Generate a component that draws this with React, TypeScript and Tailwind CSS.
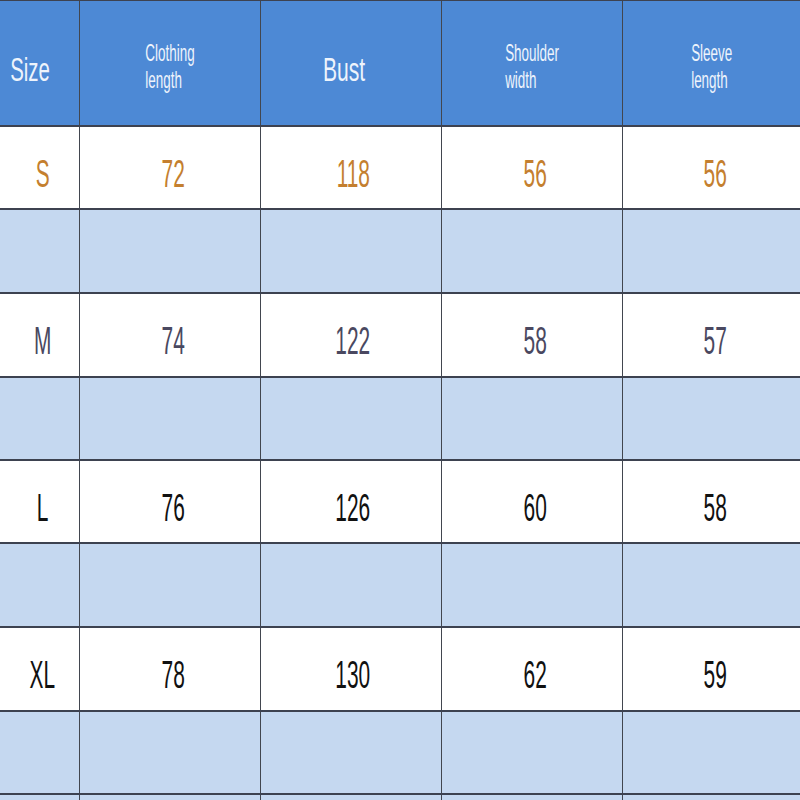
const rows = [
  { size: "S", values: ["72", "118", "56", "56"], color: "text-[#c47f2f]" },
  { size: "M", values: ["74", "122", "58", "57"], color: "text-[#4a4860]" },
  { size: "L", values: ["76", "126", "60", "58"], color: "text-[#111111]" },
  { size: "XL", values: ["78", "130", "62", "59"], color: "text-[#111111]" },
];

const heights = ["h-[83px]", "h-[84px]"];
// the numbers sit a little right of each column's centre
const shifts = ["translate-x-[3px]", "translate-x-[2px]", "translate-x-[3px]", "translate-x-[4px]"];

const Cell = ({ children, last }: { children?: React.ReactNode; last?: boolean }) => (
  <div
    className={
      "flex items-center justify-center " +
      (last ? "" : "border-r-[1.5px] border-[#42464f]")
    }
  >
    {children}
  </div>
);

const Num = ({ text, color, shift }: { text: string; color: string; shift: string }) => (
  <span
    className={
      "inline-block scale-x-[0.55] text-[38px] leading-none translate-y-[6px] " + shift + " " + color
    }
  >
    {text}
  </span>
);

const Head2 = ({ a, b }: { a: string; b: string }) => (
  <div className="flex flex-col items-start text-[24px] leading-[27px] text-[#eef4fc] scale-x-[0.56] translate-y-[3px]">
    <span>{a}</span>
    <span>{b}</span>
  </div>
);

const cols = "grid grid-cols-[80px_181px_181px_181px_177px]";

export default function App() {
  return (
    <div className="w-[800px] h-[800px] overflow-hidden bg-[#c5d8f0] font-['Liberation_Sans',Arial,sans-serif]">
      <div className={cols + " h-[127px] bg-[#4d89d5] border-t border-b-2 border-[#3d4250]"}>
        <Cell>
          <span className="inline-block scale-x-[0.6] text-[34px] text-[#eef4fc] -translate-x-[9px] translate-y-[6px]">
            Size
          </span>
        </Cell>
        <Cell>
          <Head2 a="Clothing" b="length" />
        </Cell>
        <Cell>
          <span className="inline-block scale-x-[0.62] text-[34px] text-[#eef4fc] -translate-x-[7px] translate-y-[6px]">
            Bust
          </span>
        </Cell>
        <Cell>
          <Head2 a="Shoulder" b="width" />
        </Cell>
        <Cell last>
          <Head2 a="Sleeve" b="length" />
        </Cell>
      </div>
      {rows.map((row, i) => (
        <div key={row.size}>
          <div className={cols + " bg-white border-b-2 border-[#3d4250] " + heights[i % 2]}>
            <Cell>
              <Num text={row.size} color={row.color} shift="translate-x-[3px]" />
            </Cell>
            {row.values.map((v, j) => (
              <Cell key={j} last={j === 3}>
                <Num text={v} color={row.color} shift={shifts[j]} />
              </Cell>
            ))}
          </div>
          <div className={cols + " bg-[#c5d8f0] border-b-2 border-[#3d4250] " + heights[(i + 1) % 2]}>
            <Cell />
            <Cell />
            <Cell />
            <Cell />
            <Cell last />
          </div>
        </div>
      ))}
      <div className={cols + " h-[10px]"}>
        <Cell />
        <Cell />
        <Cell />
        <Cell />
        <Cell last />
      </div>
    </div>
  );
}
